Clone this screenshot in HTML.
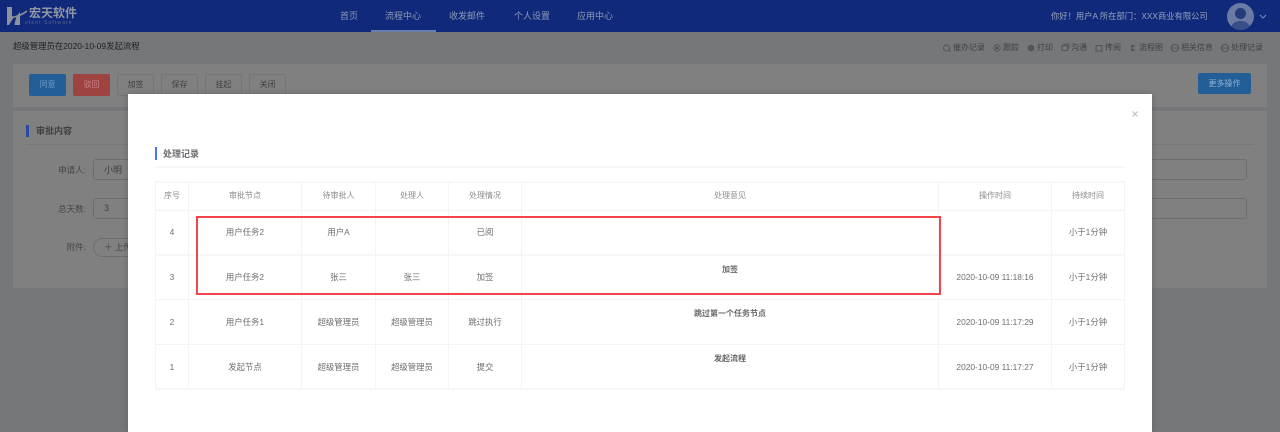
<!DOCTYPE html>
<html lang="zh-CN">
<head>
<meta charset="utf-8">
<title>处理记录</title>
<style>
html,body{margin:0;padding:0;width:1280px;height:432px;overflow:hidden;background:#76777b}
#w{position:relative;width:1280px;height:432px;overflow:hidden;background:#76777b;font-family:"Liberation Sans","Noto Sans CJK SC",sans-serif;filter:blur(.35px)}
#w div{position:absolute;box-sizing:border-box}
.t{white-space:nowrap;font-size:8px;line-height:12px;color:#4c4d50}
.n{font-size:9px;color:#8f9bb8;top:10px;height:12px;line-height:12px;white-space:nowrap}
.b{top:74px;width:37px;height:22px;border-radius:2px;font-size:8px;line-height:20px;text-align:center;border:1px solid #74757a;color:#3f4043}
.i{height:21px;border:1px solid #6d6e71;border-radius:3px}
.lb{font-size:8.5px;line-height:12px;color:#45464a;white-space:nowrap;text-align:right}
.m{font-size:8px;line-height:12px;color:#3f4043;white-space:nowrap;top:42px}
.g{font-size:8.4px;line-height:12px;color:#6d6e71;white-space:nowrap;text-align:center}
.h{font-size:8px;line-height:12px;color:#8a8b8d;white-space:nowrap;text-align:center;top:190px}
.o{font-size:8px;font-weight:bold;line-height:12px;color:#666;white-space:nowrap;text-align:center;left:522px;width:416px}
.v{background:#f3f4f8;width:1px;top:181px;height:208px}
.r{background:#f3f4f8;height:1px;left:155px;width:970px}
</style>
</head>
<body>
<div id="w">
  <!-- header -->
  <div style="left:0;top:0;width:1280px;height:32px;background:#10297a"></div>
  <svg style="position:absolute;left:6px;top:6px" width="22" height="20" viewBox="0 0 22 20">
    <path d="M1 1h5v9l2 1C6 14 4 17 3 19H1zM14 6v13H8.500C9 15 10 12 11 10l3-4z" fill="#8d929d"/>
    <path d="M6 11.500C11 10.500 16 9 21 5" stroke="#8d929d" stroke-width="1.600" fill="none"/>
  </svg>
  <div class="t" style="left:29px;top:6px;font-size:12px;line-height:14px;font-weight:bold;color:#9297a3">宏天软件</div>
  <div class="t" style="left:25px;top:20px;font-size:5px;line-height:7px;letter-spacing:1.100px;color:#59688f">otent Software</div>
  <div class="n" style="left:340px">首页</div>
  <div class="n" style="left:385px">流程中心</div>
  <div class="n" style="left:449px">收发邮件</div>
  <div class="n" style="left:514px">个人设置</div>
  <div class="n" style="left:577px">应用中心</div>
  <div style="left:371px;top:30px;width:65px;height:2px;background:#6b7cae"></div>
  <div class="t" style="left:1051px;top:10px;font-size:8.300px;color:#98a3bd">你好！用户A 所在部门：XXX商业有限公司</div>
  <div style="left:1227px;top:3px;width:27px;height:27px;border-radius:50%;background:#6a7aa2;overflow:hidden">
    <div style="left:8px;top:5px;width:11px;height:11px;border-radius:50%;background:#243c7c"></div>
    <div style="left:4px;top:18px;width:19px;height:14px;border-radius:50%;background:#384e88"></div>
  </div>
  <svg style="position:absolute;left:1259px;top:14px" width="8" height="5" viewBox="0 0 8 5"><path d="M1 1l3 3 3-3" stroke="#7f8cb1" fill="none"/></svg>

  <!-- sub bar -->
  <div class="t" style="left:13px;top:40px;font-size:8.400px;color:#1f2022">超级管理员在2020-10-09发起流程</div>
  <div class="m" style="left:953px">催办记录</div>
  <div class="m" style="left:1003px">跟踪</div>
  <div class="m" style="left:1037px">打印</div>
  <div class="m" style="left:1071px">沟通</div>
  <div class="m" style="left:1105px">传阅</div>
  <div class="m" style="left:1139px">流程图</div>
  <div class="m" style="left:1181px">相关信息</div>
  <div class="m" style="left:1231px">处理记录</div>
  <svg style="position:absolute;left:942px;top:43px" width="300" height="10" viewBox="0 0 300 10" fill="none" stroke="#4a4b4f" stroke-width=".8">
    <circle cx="4.500" cy="5" r="3"/><path d="M7 7.500l1.500 1.500"/>
    <circle cx="55" cy="5" r="3.200"/><circle cx="55" cy="5" r="1" fill="#4a4b4f"/>
    <circle cx="89" cy="5" r="2.800" fill="#55565a"/>
    <rect x="120" y="2.500" width="5.500" height="5"/><path d="M122 2.500V1h5v4h-1.500"/>
    <path d="M154 2.500h6v5.500h-6z"/>
    <path d="M190 2v6M190 3h3M190 7h3" stroke-width="1.200"/>
    <circle cx="233" cy="5" r="3.600"/><path d="M229.500 5h7"/>
    <circle cx="283" cy="5" r="3.600"/><path d="M279.500 5h7"/>
  </svg>

  <!-- toolbar card -->
  <div style="left:13px;top:64px;width:1254px;height:43px;background:#808080"></div>
  <div class="b" style="left:29px;background:#245e96;border-color:#245e96;color:#6f9cc8">同意</div>
  <div class="b" style="left:73px;background:#9e4242;border-color:#9e4242;color:#c98585">驳回</div>
  <div class="b" style="left:117px">加签</div>
  <div class="b" style="left:161px">保存</div>
  <div class="b" style="left:205px">挂起</div>
  <div class="b" style="left:249px">关闭</div>
  <div class="b" style="left:1198px;top:73px;width:53px;height:21px;line-height:19px;background:#245e96;border-color:#245e96;color:#8fb4d8">更多操作</div>

  <!-- content card -->
  <div style="left:13px;top:111px;width:1254px;height:177px;background:#808080"></div>
  <div style="left:26px;top:125px;width:3px;height:12px;background:#2b4aa3"></div>
  <div class="t" style="left:36px;top:125px;font-size:9px;font-weight:bold;color:#3f4043">审批内容</div>
  <div style="left:26px;top:144px;width:1228px;height:1px;background:#77787a"></div>
  <div class="lb" style="left:40px;top:164px;width:46px">申请人:</div>
  <div class="i" style="left:93px;top:159px;width:60px"></div>
  <div class="t" style="left:104px;top:164px;font-size:9px;color:#3f4043">小明</div>
  <div class="lb" style="left:40px;top:203px;width:46px">总天数:</div>
  <div class="i" style="left:93px;top:198px;width:60px"></div>
  <div class="t" style="left:104px;top:202px;font-size:9px;color:#3f4043">3</div>
  <div class="lb" style="left:40px;top:241px;width:46px">附件:</div>
  <div class="i" style="left:93px;top:238px;width:60px;height:19px;border-radius:10px"></div>
  <div class="t" style="left:104px;top:241px;font-size:8.500px;color:#3f4043">＋ 上传</div>
  <div class="i" style="left:1100px;top:159px;width:147px"></div>
  <div class="i" style="left:1100px;top:198px;width:147px"></div>

  <!-- modal -->
  <div style="left:128px;top:94px;width:1024px;height:338px;background:#fff;box-shadow:0 0 6px rgba(0,0,0,.18)"></div>
  <svg style="position:absolute;left:1132px;top:111px" width="6" height="6" viewBox="0 0 6 6"><path d="M.5.500l5 5M5.500.500l-5 5" stroke="#b6bac4" stroke-width=".9"/></svg>
  <div style="left:155px;top:147px;width:2px;height:13px;background:#4a74f0"></div>
  <div class="t" style="left:163px;top:148px;font-size:9px;font-weight:bold;color:#6a6c70">处理记录</div>
  <div style="left:155px;top:166px;width:970px;height:2px;background:#f6f7f9"></div>

  <!-- table lines -->
  <div class="r" style="top:181px;height:2px;background:#f6f7f9"></div>
  <div class="r" style="top:210px"></div>
  <div class="r" style="top:254px;height:2px;background:#f6f7f9"></div>
  <div class="r" style="top:299px"></div>
  <div class="r" style="top:344px"></div>
  <div class="r" style="top:388px;height:2px;background:#f6f7f9"></div>
  <div class="v" style="left:155px"></div>
  <div class="v" style="left:188px"></div>
  <div class="v" style="left:301px"></div>
  <div class="v" style="left:375px"></div>
  <div class="v" style="left:448px"></div>
  <div class="v" style="left:521px"></div>
  <div class="v" style="left:938px"></div>
  <div class="v" style="left:1051px"></div>
  <div class="v" style="left:1124px"></div>

  <!-- headers -->
  <div class="h" style="left:156px;width:32px">序号</div>
  <div class="h" style="left:189px;width:112px">审批节点</div>
  <div class="h" style="left:302px;width:73px">待审批人</div>
  <div class="h" style="left:376px;width:72px">处理人</div>
  <div class="h" style="left:449px;width:72px">处理情况</div>
  <div class="h" style="left:522px;width:416px">处理意见</div>
  <div class="h" style="left:939px;width:112px">操作时间</div>
  <div class="h" style="left:1052px;width:72px">持续时间</div>

  <!-- row 4 -->
  <div class="g" style="left:156px;width:32px;top:226px">4</div>
  <div class="g" style="left:189px;width:112px;top:226px">用户任务2</div>
  <div class="g" style="left:302px;width:73px;top:226px">用户A</div>
  <div class="g" style="left:449px;width:72px;top:226px">已阅</div>
  <div class="g" style="left:1052px;width:72px;top:226px">小于1分钟</div>
  <!-- row 3 -->
  <div class="g" style="left:156px;width:32px;top:271px">3</div>
  <div class="g" style="left:189px;width:112px;top:271px">用户任务2</div>
  <div class="g" style="left:302px;width:73px;top:271px">张三</div>
  <div class="g" style="left:376px;width:72px;top:271px">张三</div>
  <div class="g" style="left:449px;width:72px;top:271px">加签</div>
  <div class="o" style="top:264px">加签</div>
  <div class="g" style="left:939px;width:112px;top:271px">2020-10-09 11:18:16</div>
  <div class="g" style="left:1052px;width:72px;top:271px">小于1分钟</div>
  <!-- row 2 -->
  <div class="g" style="left:156px;width:32px;top:316px">2</div>
  <div class="g" style="left:189px;width:112px;top:316px">用户任务1</div>
  <div class="g" style="left:302px;width:73px;top:316px">超级管理员</div>
  <div class="g" style="left:376px;width:72px;top:316px">超级管理员</div>
  <div class="g" style="left:449px;width:72px;top:316px">跳过执行</div>
  <div class="o" style="top:308px">跳过第一个任务节点</div>
  <div class="g" style="left:939px;width:112px;top:316px">2020-10-09 11:17:29</div>
  <div class="g" style="left:1052px;width:72px;top:316px">小于1分钟</div>
  <!-- row 1 -->
  <div class="g" style="left:156px;width:32px;top:361px">1</div>
  <div class="g" style="left:189px;width:112px;top:361px">发起节点</div>
  <div class="g" style="left:302px;width:73px;top:361px">超级管理员</div>
  <div class="g" style="left:376px;width:72px;top:361px">超级管理员</div>
  <div class="g" style="left:449px;width:72px;top:361px">提交</div>
  <div class="o" style="top:353px">发起流程</div>
  <div class="g" style="left:939px;width:112px;top:361px">2020-10-09 11:17:27</div>
  <div class="g" style="left:1052px;width:72px;top:361px">小于1分钟</div>

  <!-- red annotation -->
  <div style="left:196px;top:216px;width:745px;height:79px;border:2px solid #f2444a"></div>
</div>
</body>
</html>
